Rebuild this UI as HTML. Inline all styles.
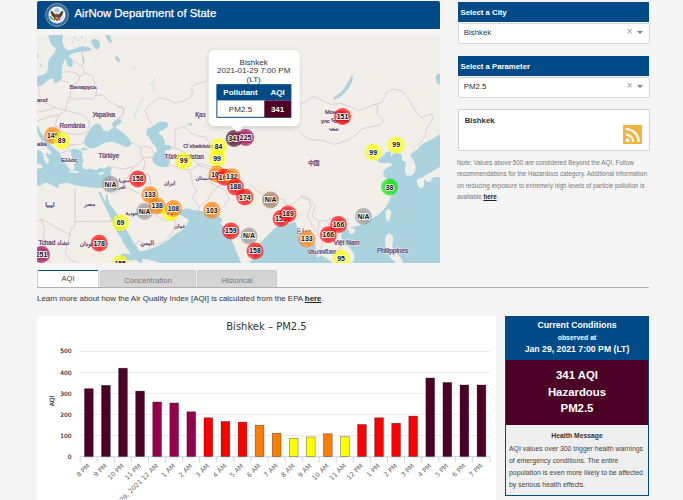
<!DOCTYPE html>
<html lang="en">
<head>
<meta charset="utf-8">
<title>AirNow Department of State</title>
<style>
*{box-sizing:border-box;margin:0;padding:0}
html,body{width:683px;height:500px;overflow:hidden;background:#f5f5f5;font-family:"Liberation Sans",sans-serif;color:#333}
.abs{position:absolute}
#hdr{left:37px;top:1px;width:403px;height:28px;background:#004a87;border-radius:2px 2px 0 0}
#hdr .t{position:absolute;left:37.5px;top:5.5px;font-size:11.4px;font-weight:normal;color:#fff;white-space:nowrap;-webkit-text-stroke:0.25px #fff}
#map{left:37px;top:35px;width:403px;height:228px;background:#f2efe9;overflow:hidden}
.ph{left:458px;width:191px;height:19.5px;background:#004a87;color:#fff;font-size:7.75px;font-weight:bold;padding:5.6px 0 0 2.6px;white-space:nowrap}
.sel{left:457.7px;width:192px;height:20.8px;background:#fff;border:1px solid #d6d6d6;border-radius:2px;font-size:7.9px;color:#333;padding:3.5px 0 0 5px}
.sel .x{position:absolute;left:167.8px;top:1.4px;font-size:10.5px;color:#999}
.sel .a{position:absolute;left:178.1px;top:7.1px;width:0;height:0;border-left:3.1px solid transparent;border-right:3.1px solid transparent;border-top:3px solid #808080}
#city{left:457.7px;top:109.1px;width:192px;height:42.2px;background:#fff;border:1px solid #d2d2d2;font-size:7.8px;font-weight:bold;color:#333;padding:5.9px 0 0 6px}
#note{left:456.9px;top:157.2px;width:195px;font-size:6.27px;line-height:11.3px;color:#777;white-space:nowrap}
#note b{color:#222;text-decoration:underline}
.tab{top:270.3px;height:17px;font-size:7.6px;text-align:center;padding-top:5px;color:#777;background:#d4d4d4;border:1px solid #ccc;border-bottom:none;border-radius:2px 2px 0 0}
#learn{left:37px;top:294px;font-size:7.9px;color:#333;white-space:nowrap}
#learn b{text-decoration:underline;color:#222}
#chart{left:37px;top:316px;width:459px;height:184px;background:#fff}
#cc{left:505px;top:316px;width:144px;height:180px;border:1px solid #004a87;background:#efefef}
#cc .h{position:absolute;left:-1px;top:-1px;width:144px;height:43.6px;background:#004a87;color:#fff;text-align:center;font-weight:bold}
#cc .m{position:absolute;left:0;top:42.6px;width:142px;height:65.6px;background:#4c0026;color:#fff;text-align:center;font-weight:bold;font-size:11.4px;line-height:16.3px;padding-top:7.7px}
#cc .hm{position:absolute;left:0;top:108.2px;width:142px;font-size:6.9px;line-height:12px;color:#444;padding:4.4px 0 0 3px;white-space:nowrap}
</style>
</head>
<body>
<div id="hdr" class="abs">
<svg class="abs" style="left:8px;top:2px" width="24" height="24" viewBox="0 0 24 24">
<circle cx="12" cy="12" r="11.7" fill="#b9b36a"/>
<circle cx="12" cy="12" r="11.1" fill="#2f6db3"/>
<circle cx="12" cy="12" r="8.5" fill="#f4f5f3"/>
<circle cx="12" cy="7.2" r="2.5" fill="#a9cbe0"/>
<path d="M5.6 8.2 Q7.2 7.6 8.2 9 Q9.6 11 11 11.6 L12 10.6 L13 11.6 Q14.4 11 15.8 9 Q16.8 7.6 18.4 8.2 Q18.2 12.6 14.6 15.2 L15.6 17.6 L13.2 16.6 L12 18.4 L10.8 16.6 L8.4 17.6 L9.4 15.2 Q5.8 12.6 5.6 8.2Z" fill="#5e4424"/>
<rect x="10.4" y="12.6" width="3.2" height="3.6" rx="1" fill="#e8707a"/>
<rect x="10.4" y="12.6" width="3.2" height="1.2" fill="#1f3f7f"/>
<path d="M5.2 13 Q5.6 15.6 8.6 16.6" stroke="#4c8a3a" stroke-width="1.3" fill="none"/>
<path d="M15.6 16.6 Q17.6 15.8 18.4 14" stroke="#9a9a8a" stroke-width="0.7" fill="none"/>
</svg>
<div class="t">AirNow Department of State</div>
</div>

<div id="map" class="abs">
<svg id="mapsvg" class="abs" style="left:0;top:0" width="403" height="228" viewBox="37 35 403 228">
<!--MAP-->
<defs><filter id="blur" x="-20%" y="-20%" width="140%" height="140%"><feGaussianBlur stdDeviation="2"/></filter></defs>
<rect x="37" y="35" width="403" height="228" fill="#f2efe9"/>
<path d="M49.7 33.5 C51.9 32.2 59.4 32.2 61.7 33.5 C64.0 34.9 62.1 38.7 62.5 41.0 C62.9 43.3 63.0 44.6 64.0 46.2 C64.9 47.9 65.8 49.6 67.7 50.0 C69.6 50.4 71.9 49.2 74.5 48.5 C77.0 47.8 79.1 46.4 82.0 46.2 C84.8 46.1 88.6 47.1 90.2 47.7 C91.8 48.4 91.9 49.3 91.0 50.0 C90.0 50.7 87.4 51.1 85.0 51.5 C82.5 51.9 79.8 51.8 77.5 52.2 C75.2 52.6 73.7 53.1 72.2 53.7 C70.7 54.4 69.5 55.3 69.2 56.0 C69.0 56.7 70.2 56.8 70.7 57.5 C71.3 58.2 71.8 58.5 72.2 59.7 C72.6 61.0 73.3 62.9 73.0 64.2 C72.7 65.6 71.8 67.2 70.7 67.2 C69.7 67.2 67.8 65.6 67.0 64.2 C66.2 62.9 66.8 60.3 66.2 59.7 C65.7 59.2 64.7 60.0 64.0 61.2 C63.3 62.5 62.9 64.5 62.5 66.5 C62.1 68.5 61.9 70.2 61.7 72.5 C61.6 74.8 62.4 77.7 61.7 79.2 C61.1 80.7 58.8 80.1 58.0 80.7 C57.2 81.4 57.9 82.7 57.2 83.0 C56.6 83.2 55.1 83.0 54.2 82.2 C53.4 81.4 53.8 78.9 52.7 78.5 C51.7 78.1 50.0 78.9 48.2 80.0 C46.5 81.1 44.6 83.4 43.0 84.5 C41.4 85.6 40.6 85.8 39.2 86.0 C37.9 86.1 36.2 86.7 35.5 85.2 C34.8 83.7 34.6 79.5 35.5 77.7 C36.4 76.0 38.9 76.3 40.7 75.5 C42.6 74.7 44.6 74.6 46.0 73.2 C47.3 71.9 47.8 70.0 48.2 68.0 C48.6 66.0 47.8 63.9 48.2 62.0 C48.6 60.1 49.4 59.1 50.5 57.5 C51.6 55.9 53.3 54.6 54.2 53.0 C55.2 51.4 56.1 49.8 55.7 48.5 C55.3 47.1 53.1 46.8 52.0 45.5 C50.9 44.1 50.1 43.2 49.7 41.0 C49.3 38.8 47.6 34.9 49.7 33.5Z" fill="#aad3df"/>
<path d="M91.7 40.2 C92.4 39.4 94.1 38.5 95.5 38.7 C96.8 39.0 98.4 40.4 99.2 41.7 C100.0 43.1 100.4 44.9 100.0 46.2 C99.6 47.6 98.0 49.1 97.0 49.2 C95.9 49.4 94.9 48.1 94.0 47.0 C93.0 45.9 92.1 44.5 91.7 43.2 C91.3 42.0 91.0 41.1 91.7 40.2Z" fill="#aad3df"/>
<path d="M106.0 34.3 C106.6 34.0 108.7 34.5 109.7 35.7 C110.7 37.0 111.5 39.6 111.7 41.0 C111.8 42.3 111.1 43.4 110.5 43.2 C109.8 43.1 109.0 41.3 108.2 40.2 C107.4 39.2 106.4 38.3 106.0 37.2 C105.6 36.2 105.3 34.5 106.0 34.3Z" fill="#aad3df"/>
<path d="M82.4 56.7 C82.5 55.8 83.4 56.4 83.8 57.5 C84.1 58.6 84.5 61.8 84.4 62.7 C84.3 63.7 83.5 63.8 83.2 62.7 C82.8 61.7 82.3 57.7 82.4 56.7Z" fill="#aad3df"/>
<path d="M115.0 57.2 C115.1 56.6 116.3 56.1 117.2 56.7 C118.1 57.3 119.5 59.6 119.8 60.5 C120.0 61.4 119.4 61.8 118.7 61.7 C118.1 61.6 116.8 60.5 116.2 59.7 C115.5 58.9 114.8 57.7 115.0 57.2Z" fill="#aad3df"/>
<path d="M88.7 131.2 C89.7 129.8 91.0 127.3 92.5 126.0 C94.0 124.6 95.4 123.8 97.0 123.7 C98.6 123.7 100.4 124.6 101.5 125.7 C102.5 126.8 101.9 128.7 103.0 129.7 C104.0 130.8 106.0 131.8 107.5 131.7 C108.9 131.6 110.1 129.9 111.2 129.0 C112.3 128.1 113.3 127.5 113.5 126.7 C113.6 125.9 112.0 125.4 112.0 124.5 C112.0 123.6 112.2 122.7 113.5 121.8 C114.7 120.8 117.2 119.3 118.7 119.2 C120.2 119.2 121.7 120.5 121.7 121.5 C121.7 122.4 119.8 123.5 118.7 124.5 C117.6 125.4 115.7 125.8 115.7 126.7 C115.7 127.7 117.1 128.4 118.7 129.7 C120.3 131.1 122.7 132.3 124.7 134.2 C126.7 136.1 128.8 138.4 130.0 140.2 C131.1 142.0 131.7 143.1 131.2 144.3 C130.6 145.5 128.8 146.9 127.0 147.0 C125.1 147.1 123.7 145.7 121.0 144.7 C118.3 143.8 115.1 142.0 112.0 141.7 C108.9 141.5 106.4 142.3 103.7 143.2 C101.0 144.2 99.3 146.0 97.0 147.0 C94.7 147.9 92.9 148.6 91.0 148.5 C89.1 148.3 87.7 147.3 86.5 146.2 C85.3 145.1 84.5 144.0 84.2 142.5 C84.0 141.0 84.4 139.5 85.0 138.0 C85.5 136.5 86.6 135.4 87.2 134.2 C87.9 133.0 87.8 132.7 88.7 131.2Z" fill="#aad3df"/>
<path d="M81.2 148.5 C81.8 148.1 83.8 147.6 85.0 147.7 C86.2 147.9 88.0 148.7 88.0 149.2 C88.0 149.7 86.1 150.3 85.0 150.4 C83.8 150.6 82.4 150.3 81.7 150.0 C81.0 149.6 80.6 148.9 81.2 148.5Z" fill="#aad3df"/>
<path d="M35.5 128.0 C36.6 119.4 39.6 131.1 41.5 133.2 C43.4 135.4 43.8 137.4 46.0 140.0 C48.2 142.6 51.1 145.2 53.5 147.5 C55.9 149.8 58.0 151.0 59.5 152.7 C61.0 154.5 60.8 155.5 61.7 157.2 C62.7 159.0 63.7 160.7 64.7 162.5 C65.8 164.2 66.5 165.6 67.7 167.0 C68.9 168.3 70.3 169.7 71.5 170.0 C72.7 170.2 74.1 169.6 74.5 168.5 C74.9 167.4 73.4 165.1 73.7 164.0 C74.1 162.9 76.1 163.4 76.3 162.5 C76.4 161.5 75.3 159.9 74.5 158.7 C73.6 157.5 72.2 156.9 71.5 155.7 C70.8 154.5 71.1 152.9 70.7 152.0 C70.3 151.0 68.7 151.0 69.2 150.5 C69.8 149.9 72.0 149.1 73.7 149.0 C75.5 148.9 77.5 149.2 79.0 149.7 C80.5 150.3 81.4 150.8 82.0 152.0 C82.5 153.2 81.7 154.9 82.0 156.5 C82.2 158.1 83.5 159.4 83.5 161.0 C83.5 162.6 81.7 164.0 82.0 165.5 C82.2 167.0 83.6 168.7 85.0 169.2 C86.3 169.8 87.6 168.3 89.5 168.5 C91.4 168.6 93.6 170.1 95.5 170.0 C97.4 169.8 98.3 168.0 100.0 167.7 C101.6 167.5 102.8 168.7 104.5 168.5 C106.1 168.2 107.6 166.2 109.0 166.2 C110.3 166.2 111.7 167.5 112.0 168.5 C112.2 169.4 110.6 170.1 110.5 171.5 C110.3 172.8 111.2 174.4 111.2 176.0 C111.2 177.6 111.1 178.9 110.5 180.5 C109.8 182.1 108.8 183.8 107.5 185.0 C106.1 186.2 104.9 186.7 103.0 187.2 C101.1 187.8 99.4 188.0 97.0 188.0 C94.5 188.0 92.2 187.5 89.5 187.2 C86.8 186.9 84.7 186.9 82.0 186.5 C79.3 186.1 77.2 185.6 74.5 185.0 C71.8 184.3 69.7 182.9 67.0 182.7 C64.3 182.6 61.1 183.3 59.5 184.2 C57.9 185.2 59.3 187.8 58.0 188.0 C56.6 188.1 54.2 185.9 52.0 185.0 C49.8 184.0 49.0 183.4 46.0 182.7 C43.0 182.0 37.4 191.1 35.5 181.2 C33.6 171.4 34.4 136.6 35.5 128.0Z" fill="#aad3df"/>
<path d="M98.8 192.7 C98.6 191.6 99.5 191.4 100.3 192.1 C101.0 192.8 102.0 195.2 103.0 196.7 C103.9 198.3 104.8 201.2 105.4 200.8 C106.0 200.4 105.9 195.7 106.3 194.5 C106.6 193.3 107.0 192.8 107.5 194.2 C107.9 195.5 107.4 199.1 108.7 202.0 C109.9 204.9 112.4 207.6 114.4 210.4 C116.3 213.2 117.2 214.1 119.5 217.7 C121.7 221.4 124.5 226.5 127.0 230.8 C129.4 235.0 130.9 238.0 133.0 241.3 C135.0 244.6 136.6 246.8 138.2 249.2 C139.8 251.6 141.3 251.9 141.9 254.5 C142.6 257.0 143.0 262.5 141.9 263.5 C140.9 264.4 138.1 261.4 136.3 259.9 C134.4 258.4 133.6 257.5 131.8 255.1 C129.9 252.6 127.9 249.8 125.8 246.4 C123.6 242.9 121.9 239.7 119.8 235.9 C117.6 232.1 115.6 228.9 113.8 225.4 C111.9 221.8 111.1 219.4 109.6 216.1 C108.1 212.8 106.9 210.3 105.4 207.1 C103.9 203.9 102.4 200.7 101.2 198.1 C100.0 195.5 98.9 193.8 98.8 192.7Z" fill="#aad3df"/>
<path d="M154.7 125.0 C156.2 124.0 157.2 122.5 159.2 122.0 C161.3 121.5 164.4 121.5 166.0 122.0 C167.6 122.5 168.4 123.8 168.2 125.0 C168.1 126.2 166.6 127.7 165.2 128.7 C163.9 129.8 161.9 130.2 160.7 131.0 C159.5 131.8 158.3 132.4 158.5 133.2 C158.6 134.0 160.4 134.3 161.5 135.5 C162.6 136.7 163.8 138.4 164.5 140.0 C165.2 141.6 164.3 143.5 165.2 144.5 C166.2 145.4 168.5 144.7 169.7 145.2 C170.9 145.8 172.0 146.7 172.0 147.5 C172.0 148.3 170.9 149.2 169.7 149.7 C168.5 150.3 165.8 149.5 165.2 150.5 C164.7 151.4 165.9 153.2 166.7 155.0 C167.5 156.7 169.3 158.5 169.7 160.2 C170.1 162.0 169.9 163.5 169.0 164.7 C168.0 165.9 166.2 166.7 164.5 167.0 C162.7 167.2 161.1 166.9 159.2 166.2 C157.3 165.5 155.2 164.6 154.0 163.2 C152.8 161.9 152.4 160.5 152.5 158.7 C152.6 157.0 153.9 155.0 154.7 153.5 C155.5 152.0 156.9 151.7 157.0 150.5 C157.1 149.3 156.4 148.2 155.5 146.7 C154.5 145.2 152.8 143.9 151.7 142.2 C150.7 140.6 150.4 139.1 149.5 137.7 C148.5 136.4 146.9 136.2 146.5 134.7 C146.1 133.3 146.4 130.8 147.2 129.5 C148.0 128.1 149.6 128.1 151.0 127.2 C152.3 126.4 153.3 125.9 154.7 125.0Z" fill="#aad3df"/>
<path d="M188.8 123.8 C189.0 123.4 190.6 123.0 191.2 123.2 C191.7 123.4 192.0 124.6 191.8 125.0 C191.5 125.4 190.2 125.8 189.7 125.6 C189.1 125.4 188.5 124.2 188.8 123.8Z" fill="#aad3df"/>
<path d="M151.3 197.5 C152.4 197.7 154.6 198.9 156.7 200.2 C158.8 201.5 160.6 203.6 163.0 204.7 C165.4 205.8 167.4 206.0 170.2 206.5 C172.9 207.0 176.3 206.7 178.3 207.4 C180.2 208.0 179.5 209.9 181.0 210.1 C182.4 210.2 184.1 208.3 186.4 208.3 C188.6 208.3 191.0 209.6 193.6 210.1 C196.2 210.6 198.5 210.5 200.8 211.0 C203.0 211.5 204.2 212.0 206.2 212.8 C208.1 213.6 209.3 214.8 211.6 215.5 C213.8 216.1 216.8 215.6 218.8 216.4 C220.7 217.2 222.0 218.7 222.4 220.0 C222.7 221.3 220.1 222.3 220.6 223.6 C221.0 224.9 223.8 225.6 225.1 227.2 C226.4 228.8 226.3 229.7 227.8 232.6 C229.2 235.5 231.5 239.8 233.2 243.4 C234.8 246.9 235.5 249.1 236.8 252.4 C238.0 255.6 239.4 258.4 240.4 261.4 C241.3 264.3 256.6 267.3 242.1 268.6 C227.7 269.9 175.2 269.5 160.3 268.6 C145.4 267.6 161.5 264.8 159.4 263.2 C157.3 261.5 152.5 260.4 148.6 259.6 C144.7 258.8 140.7 258.5 137.8 258.7 C134.9 258.8 135.3 260.3 132.4 260.5 C129.5 260.6 123.5 260.7 121.6 259.6 C119.7 258.4 120.0 255.1 121.6 254.2 C123.2 253.2 127.7 254.5 130.6 254.2 C133.5 253.8 134.2 253.3 137.8 252.4 C141.4 251.4 146.2 250.2 150.4 248.8 C154.6 247.3 157.9 245.9 161.2 244.3 C164.4 242.7 166.1 241.4 168.4 239.8 C170.6 238.2 171.5 236.9 173.8 235.3 C176.0 233.7 178.7 232.6 181.0 230.8 C183.2 229.0 185.1 227.3 186.4 225.4 C187.7 223.4 188.5 221.4 188.2 220.0 C187.8 218.5 185.9 218.1 184.6 217.3 C183.3 216.5 182.1 216.1 181.0 215.5 C179.8 214.8 179.6 213.7 178.3 213.7 C177.0 213.7 175.6 215.5 173.8 215.5 C172.0 215.5 169.8 213.7 168.4 213.7 C166.9 213.7 166.8 215.8 165.7 215.5 C164.5 215.2 163.7 213.3 162.1 211.9 C160.5 210.4 158.5 209.0 156.7 207.4 C154.9 205.8 153.3 204.3 152.2 202.9 C151.1 201.4 150.6 200.3 150.4 199.3 C150.2 198.3 150.2 197.3 151.3 197.5Z" fill="#aad3df"/>
<path d="M254.0 269.0 C242.8 266.1 255.3 257.3 256.0 253.0 C256.7 248.7 256.9 247.2 258.0 245.0 C259.1 242.8 260.0 243.0 262.0 241.0 C264.0 239.0 266.7 236.3 269.0 234.0 C271.3 231.7 273.0 229.6 275.0 228.0 C277.0 226.4 277.8 225.8 280.0 225.0 C282.2 224.2 285.0 223.8 287.0 223.4 C289.0 223.0 289.6 223.3 291.0 223.0 C292.4 222.7 293.9 221.3 295.0 222.0 C296.1 222.7 296.5 225.0 297.0 227.0 C297.5 229.0 297.5 231.0 298.0 233.0 C298.5 235.0 299.1 235.8 300.0 238.0 C300.9 240.2 301.7 243.4 303.0 245.0 C304.3 246.6 305.4 247.0 307.0 247.0 C308.6 247.0 310.6 246.1 312.0 245.0 C313.4 243.9 314.3 240.3 315.0 241.0 C315.7 241.7 315.6 246.1 316.0 249.0 C316.4 251.9 316.6 253.4 317.0 257.0 C317.4 260.6 329.3 266.8 318.0 269.0 C306.7 271.2 265.2 271.9 254.0 269.0Z" fill="#aad3df"/>
<path d="M442.8 124.4 C442.5 112.3 441.9 131.0 441.4 132.8 C440.9 134.6 441.5 133.2 440.0 134.2 C438.5 135.2 435.5 137.0 433.0 138.4 C430.5 139.8 428.0 140.8 426.0 141.9 C424.0 143.0 423.3 143.4 421.8 144.7 C420.3 146.0 419.4 147.4 417.6 148.9 C415.8 150.4 413.3 152.1 412.0 153.1 C410.7 154.1 410.6 153.6 410.6 154.5 C410.6 155.4 411.2 156.4 412.0 158.0 C412.8 159.6 414.2 161.6 414.8 163.6 C415.4 165.6 415.8 167.3 415.5 169.2 C415.2 171.1 414.3 173.0 413.4 174.1 C412.5 175.2 411.7 175.2 410.6 175.5 C409.5 175.8 408.0 175.9 407.1 175.5 C406.2 175.1 406.1 174.8 405.7 173.4 C405.3 172.0 405.0 169.7 405.0 167.8 C405.0 165.9 406.2 164.3 405.7 162.9 C405.2 161.5 403.0 161.6 402.2 160.1 C401.4 158.6 402.3 155.7 401.5 154.5 C400.7 153.3 399.2 153.8 398.0 153.5 C396.8 153.3 395.9 152.8 394.9 153.1 C393.9 153.4 393.1 154.5 392.4 155.2 C391.7 155.9 391.3 157.0 391.0 156.9 C390.7 156.8 390.7 155.4 390.7 154.5 C390.7 153.6 391.7 152.1 391.0 151.7 C390.3 151.3 388.4 151.2 386.8 152.1 C385.2 153.0 383.5 155.2 381.9 156.6 C380.3 158.0 378.3 159.1 377.7 160.1 C377.1 161.1 377.3 161.4 378.4 161.9 C379.5 162.5 382.1 163.0 384.0 163.2 C385.9 163.4 387.4 162.6 388.9 162.9 C390.4 163.2 392.5 164.2 392.4 165.0 C392.3 165.8 389.5 166.3 388.2 167.1 C386.9 167.9 386.3 168.3 385.4 169.2 C384.5 170.1 383.6 170.7 383.3 172.0 C383.0 173.3 383.4 175.1 384.0 176.2 C384.6 177.3 386.0 177.2 386.8 178.3 C387.6 179.4 388.2 181.3 388.5 182.1 C388.7 182.8 387.5 181.1 388.1 182.4 C388.8 183.8 391.7 187.2 392.2 189.6 C392.8 192.0 391.9 193.3 391.2 195.7 C390.5 198.1 389.4 200.5 388.1 202.9 C386.8 205.3 385.7 207.0 384.0 209.1 C382.4 211.1 380.8 212.7 378.9 214.2 C377.1 215.7 375.8 216.0 373.8 217.3 C371.8 218.6 369.9 220.1 367.6 221.4 C365.4 222.7 363.7 223.5 361.5 224.4 C359.3 225.4 357.2 225.9 355.3 226.5 C353.5 227.0 352.3 226.8 351.2 227.5 C350.1 228.3 350.1 230.6 349.2 230.6 C348.3 230.6 347.2 227.5 346.1 227.5 C345.0 227.5 344.0 228.9 343.0 230.6 C342.1 232.2 340.8 234.7 341.0 236.7 C341.2 238.8 342.6 240.0 344.1 241.9 C345.5 243.7 347.5 245.0 349.2 247.0 C350.9 249.0 352.4 250.9 353.3 253.1 C354.2 255.3 354.7 257.3 354.3 259.3 C353.9 261.3 352.5 262.2 351.2 264.4 C349.9 266.6 330.5 270.3 347.1 271.6 C363.7 272.9 426.3 284.5 443.5 271.6 C460.7 258.7 442.9 226.5 442.8 200.0 C442.7 173.5 443.1 136.5 442.8 124.4Z" fill="#aad3df"/>
<path d="M315.4 271.6 C312.1 269.7 315.7 264.1 316.4 261.3 C317.1 258.6 318.0 256.9 319.5 256.2 C320.9 255.5 322.6 256.3 324.6 257.2 C326.6 258.2 329.1 259.5 330.7 261.3 C332.4 263.2 333.1 265.6 333.8 267.5 C334.6 269.3 338.2 270.8 334.8 271.6 C331.5 272.3 318.7 273.4 315.4 271.6Z" fill="#aad3df"/>
<path d="M333.7 98.0 C335.0 96.4 339.9 93.5 342.5 90.6 C345.1 87.7 346.7 84.4 348.3 81.8 C349.9 79.2 350.5 76.8 351.3 76.0 C352.1 75.2 353.0 75.7 352.8 77.5 C352.6 79.3 351.9 82.8 350.0 86.0 C348.1 89.2 345.2 92.6 342.5 95.0 C339.8 97.4 336.8 98.9 335.2 99.4 C333.6 99.9 332.4 99.6 333.7 98.0Z" fill="#aad3df"/>
<path d="M436.0 76.0 C436.7 74.4 440.1 72.6 441.0 74.0 C441.9 75.4 441.7 82.4 441.0 84.0 C440.3 85.6 437.9 84.4 437.0 83.0 C436.1 81.6 435.3 77.6 436.0 76.0Z" fill="#aad3df"/>
<path d="M35.5 131.0 C36.4 129.4 39.1 136.1 40.7 138.5 C42.4 140.9 43.1 142.6 44.5 144.5 C45.8 146.4 47.0 147.5 48.2 149.0 C49.5 150.5 51.4 151.7 51.5 152.7 C51.7 153.7 50.0 154.5 49.3 154.5 C48.6 154.5 48.1 152.7 47.5 152.7 C46.9 152.8 45.7 153.6 46.0 155.0 C46.3 156.3 48.7 158.7 49.0 160.2 C49.3 161.8 48.3 163.5 47.5 163.7 C46.7 163.8 45.2 162.3 44.5 161.0 C43.8 159.7 44.3 158.1 43.7 156.5 C43.2 154.9 43.0 153.6 41.5 152.0 C40.0 150.4 36.6 151.3 35.5 147.5 C34.4 143.7 34.6 132.6 35.5 131.0Z" fill="#f2efe9"/>
<path d="M69.2 170.7 C70.0 170.4 72.0 170.3 73.7 170.4 C75.4 170.6 77.9 171.0 78.7 171.5 C79.5 171.9 79.3 172.8 78.2 173.0 C77.2 173.2 74.6 172.8 73.0 172.7 C71.4 172.5 69.9 172.6 69.2 172.2 C68.6 171.9 68.4 171.1 69.2 170.7Z" fill="#f2efe9"/>
<path d="M98.8 173.0 C99.2 172.5 100.5 172.0 101.5 171.9 C102.4 171.9 103.9 172.2 104.0 172.7 C104.2 173.1 103.1 174.2 102.2 174.5 C101.4 174.8 99.8 174.7 99.2 174.5 C98.6 174.2 98.4 173.4 98.8 173.0Z" fill="#f2efe9"/>
<path d="M35.5 164.3 C36.4 163.7 39.5 163.7 40.7 164.3 C42.0 164.9 42.7 167.0 42.2 167.7 C41.8 168.5 39.7 168.5 38.5 168.5 C37.3 168.5 36.0 168.5 35.5 167.7 C35.0 167.0 34.6 164.9 35.5 164.3Z" fill="#f2efe9"/>
<path d="M416.9 180.4 C417.2 179.5 417.9 178.9 419.0 178.3 C420.1 177.7 421.9 177.5 423.2 176.9 C424.5 176.3 424.5 175.7 426.0 174.8 C427.5 173.9 429.6 173.1 431.6 172.0 C433.6 170.9 435.2 169.6 437.2 168.5 C439.2 167.4 441.8 164.7 442.8 166.1 C443.8 167.6 444.1 174.5 442.8 176.5 C441.5 178.4 437.8 176.6 435.8 176.9 C433.8 177.2 432.4 177.5 431.6 178.3 C430.8 179.1 432.4 180.5 431.6 181.1 C430.8 181.7 428.5 182.1 427.4 181.8 C426.3 181.5 425.9 179.8 425.3 179.7 C424.7 179.6 424.2 180.0 423.9 181.1 C423.6 182.2 424.4 184.7 423.9 186.0 C423.4 187.3 422.1 188.1 421.1 188.1 C420.1 188.1 419.0 186.9 418.3 186.0 C417.6 185.1 417.6 184.2 417.3 183.2 C417.1 182.2 416.6 181.3 416.9 180.4Z" fill="#f2efe9"/>
<path d="M386.1 211.1 C386.7 209.8 388.2 208.7 389.2 209.1 C390.1 209.4 391.2 211.1 391.2 213.2 C391.2 215.2 389.9 218.9 389.2 220.3 C388.4 221.8 387.7 222.1 387.1 221.4 C386.5 220.6 385.9 218.1 385.7 216.2 C385.5 214.4 385.5 212.4 386.1 211.1Z" fill="#f2efe9"/>
<path d="M386.1 235.7 C387.0 234.1 388.9 233.1 390.2 233.7 C391.5 234.2 392.9 236.4 393.3 238.8 C393.6 241.2 391.7 244.4 392.2 247.0 C392.8 249.6 394.9 251.3 396.3 253.1 C397.8 255.0 399.3 255.4 400.4 257.2 C401.5 259.1 402.8 261.8 402.5 263.4 C402.1 264.9 399.9 266.2 398.4 265.8 C396.9 265.5 395.8 262.9 394.3 261.3 C392.8 259.8 391.5 259.1 390.2 257.2 C388.9 255.4 388.0 253.7 387.1 251.1 C386.2 248.5 385.2 245.7 385.1 242.9 C384.9 240.1 385.2 237.4 386.1 235.7Z" fill="#f2efe9"/>
<path d="M348.8 229.6 C349.3 228.7 351.2 227.9 352.3 228.1 C353.4 228.3 354.8 229.6 354.9 230.6 C355.0 231.6 353.8 233.2 352.9 233.7 C351.9 234.1 350.3 233.8 349.6 233.0 C348.9 232.3 348.3 230.4 348.8 229.6Z" fill="#f2efe9"/>
<path d="M396.3 267.5 C398.5 266.6 404.0 265.7 406.6 266.5 C409.2 267.2 412.9 270.7 410.7 271.6 C408.5 272.5 396.9 272.3 394.3 271.6 C391.7 270.8 394.1 268.4 396.3 267.5Z" fill="#f2efe9"/>
<ellipse cx="37.7" cy="56.0" rx="1.35" ry="1.80" fill="#aad3df" fill-opacity="0.8"/>
<ellipse cx="40.9" cy="65.7" rx="0.75" ry="2.40" fill="#aad3df" fill-opacity="0.8"/>
<ellipse cx="74.5" cy="38.0" rx="0.90" ry="1.35" fill="#aad3df" fill-opacity="0.8"/>
<ellipse cx="78.2" cy="40.2" rx="0.75" ry="1.05" fill="#aad3df" fill-opacity="0.8"/>
<ellipse cx="82.0" cy="37.2" rx="0.75" ry="1.20" fill="#aad3df" fill-opacity="0.8"/>
<ellipse cx="85.3" cy="41.0" rx="0.60" ry="1.05" fill="#aad3df" fill-opacity="0.8"/>
<ellipse cx="72.2" cy="42.5" rx="0.60" ry="0.90" fill="#aad3df" fill-opacity="0.8"/>
<ellipse cx="118.7" cy="59.0" rx="1.20" ry="0.90" fill="#aad3df" fill-opacity="0.8"/>
<ellipse cx="109.7" cy="67.2" rx="0.90" ry="0.60" fill="#aad3df" fill-opacity="0.8"/>
<ellipse cx="95.5" cy="60.8" rx="0.75" ry="0.60" fill="#aad3df" fill-opacity="0.8"/>
<ellipse cx="120.4" cy="50.0" rx="0.75" ry="0.60" fill="#aad3df" fill-opacity="0.8"/>
<ellipse cx="134.2" cy="68.7" rx="0.75" ry="1.20" fill="#aad3df" fill-opacity="0.8"/>
<path d="M154.8 77.6 L151.3 84.7 L154.8 88.2 L152.1 92.6" fill="none" stroke="#aad3df" stroke-width="0.7" stroke-opacity="0.8"/>
<path d="M143.4 97.8 L139.8 104.9 L134.6 115.4 L138.1 120.7" fill="none" stroke="#aad3df" stroke-width="0.7" stroke-opacity="0.8"/>
<path d="M184.7 127.7 L186.4 125.1 L190.8 123.3" fill="none" stroke="#aad3df" stroke-width="0.7" stroke-opacity="0.8"/>
<path d="M82.0 51.5 L82.7 57.5 L84.2 63.5 L82.0 65.7 L85.0 73.2 L92.5 76.2 L94.7 83.0 L97.0 89.0 L95.8 95.4" fill="none" stroke="#cbb5d2" stroke-width="0.6" stroke-linejoin="round"/>
<path d="M61.7 72.5 L68.5 71.7 L75.2 72.5 L79.7 76.2 L85.0 73.2" fill="none" stroke="#cbb5d2" stroke-width="0.6" stroke-linejoin="round"/>
<path d="M58.0 80.7 L67.0 81.5 L71.5 87.5 L70.3 94.2" fill="none" stroke="#cbb5d2" stroke-width="0.6" stroke-linejoin="round"/>
<path d="M71.5 87.5 L79.0 80.0 L79.7 76.2" fill="none" stroke="#cbb5d2" stroke-width="0.6" stroke-linejoin="round"/>
<path d="M72.2 59.7 L77.5 63.5 L82.0 65.7" fill="none" stroke="#cbb5d2" stroke-width="0.6" stroke-linejoin="round"/>
<path d="M300.0 104.5 L308.2 100.4 L314.3 96.3 L322.5 100.4 L330.7 104.5 L341.0 103.4 L351.2 107.5 L359.4 110.6 L369.7 106.5 L373.8 104.5 L377.9 105.5 L376.9 113.7 L384.0 120.9 L379.9 125.0 L369.7 127.0 L361.5 129.1 L355.3 135.2 L347.1 140.3 L334.8 144.4 L322.5 140.3 L308.2 139.3 L300.0 132.1" fill="none" stroke="#cbb5d2" stroke-width="0.6" stroke-linejoin="round"/>
<path d="M373.8 104.5 L382.0 102.4 L386.1 93.2 L392.2 89.1 L402.5 91.1 L408.6 99.3 L414.8 109.6 L420.9 117.8 L431.2 113.7 L433.2 117.8 L427.1 128.0 L425.0 136.2 L417.9 146.5" fill="none" stroke="#cbb5d2" stroke-width="0.6" stroke-linejoin="round"/>
<path d="M175.0 147.5 L175.0 129.5 L184.0 126.5 L190.0 132.5 L197.5 136.2 L205.0 136.2 L208.7 142.2 L211.0 147.5 L217.0 150.5" fill="none" stroke="#cbb5d2" stroke-width="0.6" stroke-linejoin="round"/>
<path d="M172.0 147.5 L179.5 149.7 L187.0 153.5 L193.0 159.5 L199.0 165.5 L205.0 167.0 L211.0 170.0" fill="none" stroke="#cbb5d2" stroke-width="0.6" stroke-linejoin="round"/>
<path d="M164.5 167.0 L172.0 165.5 L179.5 168.5 L190.0 170.0 L191.5 176.0 L193.0 185.0" fill="none" stroke="#cbb5d2" stroke-width="0.6" stroke-linejoin="round"/>
<path d="M127.0 142.2 L134.5 143.7 L140.5 147.5 L146.5 146.0 L151.7 148.2 L154.0 153.5" fill="none" stroke="#cbb5d2" stroke-width="0.6" stroke-linejoin="round"/>
<path d="M140.5 147.5 L141.2 155.0 L145.0 161.0 L143.5 170.0 L149.5 176.0 L151.0 185.0" fill="none" stroke="#cbb5d2" stroke-width="0.6" stroke-linejoin="round"/>
<path d="M75.2 187.0 L75.2 221.5 L112.0 221.2" fill="none" stroke="#cbb5d2" stroke-width="0.6" stroke-linejoin="round"/>
<path d="M75.2 221.5 L74.5 227.5 L70.7 228.2 L70.0 235.0 L41.5 219.2 L37.0 220.7" fill="none" stroke="#cbb5d2" stroke-width="0.6" stroke-linejoin="round"/>
<path d="M41.5 219.2 L44.5 229.0 L43.0 239.5 L46.0 250.0 L50.5 265.0" fill="none" stroke="#cbb5d2" stroke-width="0.6" stroke-linejoin="round"/>
<path d="M70.0 235.0 L67.0 244.0 L65.5 253.0 L71.5 260.5 L82.0 265.0" fill="none" stroke="#cbb5d2" stroke-width="0.6" stroke-linejoin="round"/>
<path d="M250.0 184.0 L257.0 191.0 L265.0 195.0 L275.0 197.0 L284.0 200.0 L286.0 205.0 L293.0 204.0 L301.0 197.0 L309.0 200.0 L311.0 207.0 L307.0 215.0 L311.0 223.0 L316.0 231.0" fill="none" stroke="#cbb5d2" stroke-width="0.6" stroke-linejoin="round"/>
<path d="M207.0 174.0 L211.0 183.0 L219.0 187.0 L226.0 191.0 L229.0 199.0 L225.0 205.0 L219.0 211.0 L217.0 215.0" fill="none" stroke="#cbb5d2" stroke-width="0.6" stroke-linejoin="round"/>
<path d="M300.0 195.7 L308.2 197.8 L315.4 206.0 L312.3 216.2 L319.5 221.4 L326.6 220.3 L333.8 217.3 L341.0 220.3 L347.1 224.4" fill="none" stroke="#cbb5d2" stroke-width="0.6" stroke-linejoin="round"/>
<path d="M319.5 221.4 L317.4 232.6 L322.5 242.9 L320.5 253.1 L322.5 263.4" fill="none" stroke="#cbb5d2" stroke-width="0.6" stroke-linejoin="round"/>
<path d="M326.6 220.3 L330.7 228.5 L335.9 236.7 L341.0 244.9 L337.9 253.1 L344.1 256.2" fill="none" stroke="#cbb5d2" stroke-width="0.6" stroke-linejoin="round"/>
<path d="M69.2 97.0 L76.0 99.2 L86.5 98.5 L93.2 99.2 L95.5 95.5 L103.0 94.7 L107.5 100.0 L115.0 104.5 L124.0 109.0 L122.5 115.0 L118.7 118.7 L115.0 121.0" fill="none" stroke="#cbb5d2" stroke-width="0.6" stroke-linejoin="round"/>
<path d="M70.7 94.0 L69.2 97.0 L67.0 104.5 L65.5 110.5" fill="none" stroke="#cbb5d2" stroke-width="0.6" stroke-linejoin="round"/>
<path d="M65.5 110.5 L71.5 112.0 L80.5 114.2 L86.5 117.2 L89.5 122.5 L88.0 128.5" fill="none" stroke="#cbb5d2" stroke-width="0.6" stroke-linejoin="round"/>
<path d="M65.5 110.5 L59.5 115.0 L56.5 120.2 L55.0 125.5 L61.0 130.0 L65.5 133.0 L76.0 134.5 L85.0 133.0 L88.7 130.7" fill="none" stroke="#cbb5d2" stroke-width="0.6" stroke-linejoin="round"/>
<path d="M37.0 112.0 L46.0 110.5 L55.0 107.5 L65.5 110.5" fill="none" stroke="#cbb5d2" stroke-width="0.6" stroke-linejoin="round"/>
<path d="M37.0 121.0 L47.5 117.2 L59.5 115.0" fill="none" stroke="#cbb5d2" stroke-width="0.6" stroke-linejoin="round"/>
<path d="M61.0 130.0 L62.5 137.5 L70.0 145.0 L80.5 144.2 L85.0 142.0" fill="none" stroke="#cbb5d2" stroke-width="0.6" stroke-linejoin="round"/>
<path d="M70.0 145.0 L67.0 151.0 L61.0 153.2" fill="none" stroke="#cbb5d2" stroke-width="0.6" stroke-linejoin="round"/>
<path d="M38.8 77.5 L38.5 85.0 L39.2 94.0 L41.5 101.5 L37.0 104.5" fill="none" stroke="#cbb5d2" stroke-width="0.6" stroke-linejoin="round"/>
<path d="M41.5 101.5 L49.0 104.5 L55.0 107.5" fill="none" stroke="#cbb5d2" stroke-width="0.6" stroke-linejoin="round"/>
<path d="M112.3 167.0 L122.2 168.8 L133.0 167.0 L139.3 163.4 L142.0 158.0" fill="none" stroke="#cbb5d2" stroke-width="0.6" stroke-linejoin="round"/>
<path d="M133.0 167.0 L128.5 176.0 L124.0 181.4 L115.0 181.4" fill="none" stroke="#cbb5d2" stroke-width="0.6" stroke-linejoin="round"/>
<path d="M124.0 181.4 L124.0 186.8 L116.8 192.2 L112.3 194.0" fill="none" stroke="#cbb5d2" stroke-width="0.6" stroke-linejoin="round"/>
<path d="M124.0 186.8 L133.0 190.4 L140.2 194.0 L144.1 196.1" fill="none" stroke="#cbb5d2" stroke-width="0.6" stroke-linejoin="round"/>
<path d="M192.9 185.0 L196.9 190.4 L192.4 197.6 L198.7 206.6 L197.8 215.6 L192.4 217.7" fill="none" stroke="#cbb5d2" stroke-width="0.6" stroke-linejoin="round"/>
<path d="M198.7 206.6 L206.8 201.2 L212.1 192.2 L221.1 185.0" fill="none" stroke="#cbb5d2" stroke-width="0.6" stroke-linejoin="round"/>
<path d="M190.6 170.0 L201.4 163.4 L212.1 167.0 L221.1 164.3" fill="none" stroke="#cbb5d2" stroke-width="0.6" stroke-linejoin="round"/>
<path d="M156.4 215.6 L165.4 221.0 L174.4 219.2 L176.2 224.6 L172.6 231.8 L165.4 240.8 L151.0 246.2 L138.4 240.8 L133.0 248.0" fill="none" stroke="#cbb5d2" stroke-width="0.6" stroke-linejoin="round"/>
<path d="M142.0 158.0 L151.0 157.1 L157.3 160.2" fill="none" stroke="#cbb5d2" stroke-width="0.6" stroke-linejoin="round"/>
<path d="M153.0 125.1 L147.8 118.1 L145.1 110.1 L149.5 104.9 L154.8 100.5 L159.2 97.8 L168.0 99.6 L175.0 103.1 L182.0 101.4 L189.9 97.8 L192.6 92.6 L191.7 87.3 L196.1 83.8 L204.9 82.0 L208.4 78.5" fill="none" stroke="#cbb5d2" stroke-width="0.6" stroke-linejoin="round"/>
<path d="M117.0 107.5 L122.3 106.6 L124.0 111.9 L120.5 117.2 L117.0 118.9" fill="none" stroke="#cbb5d2" stroke-width="0.6" stroke-linejoin="round"/>
<text x="69.7" y="88.7" font-size="6.2" fill="#745a8a" stroke="#f2efe9" stroke-width="0.9" paint-order="stroke" font-family='"Liberation Sans","DejaVu Sans","Noto Sans CJK SC",sans-serif'>Беларусь</text>
<text x="69.7" y="88.7" font-size="6.2" fill="#745a8a" stroke="#745a8a" stroke-width="0.18" font-family='"Liberation Sans","DejaVu Sans","Noto Sans CJK SC",sans-serif'>Беларусь</text>
<text x="37" y="101.7" font-size="6.2" fill="#745a8a" stroke="#f2efe9" stroke-width="0.9" paint-order="stroke" font-family='"Liberation Sans","DejaVu Sans","Noto Sans CJK SC",sans-serif'>and</text>
<text x="37" y="101.7" font-size="6.2" fill="#745a8a" stroke="#745a8a" stroke-width="0.18" font-family='"Liberation Sans","DejaVu Sans","Noto Sans CJK SC",sans-serif'>and</text>
<text x="92.5" y="116.7" font-size="6.4" fill="#745a8a" stroke="#f2efe9" stroke-width="0.9" paint-order="stroke" font-family='"Liberation Sans","DejaVu Sans","Noto Sans CJK SC",sans-serif'>Україна</text>
<text x="92.5" y="116.7" font-size="6.4" fill="#745a8a" stroke="#745a8a" stroke-width="0.18" font-family='"Liberation Sans","DejaVu Sans","Noto Sans CJK SC",sans-serif'>Україна</text>
<text x="59.5" y="128.2" font-size="6.4" fill="#745a8a" stroke="#f2efe9" stroke-width="0.9" paint-order="stroke" font-family='"Liberation Sans","DejaVu Sans","Noto Sans CJK SC",sans-serif'>România</text>
<text x="59.5" y="128.2" font-size="6.4" fill="#745a8a" stroke="#745a8a" stroke-width="0.18" font-family='"Liberation Sans","DejaVu Sans","Noto Sans CJK SC",sans-serif'>România</text>
<text x="37" y="146" font-size="6.2" fill="#745a8a" stroke="#f2efe9" stroke-width="0.9" paint-order="stroke" font-family='"Liberation Sans","DejaVu Sans","Noto Sans CJK SC",sans-serif'>alia</text>
<text x="37" y="146" font-size="6.2" fill="#745a8a" stroke="#745a8a" stroke-width="0.18" font-family='"Liberation Sans","DejaVu Sans","Noto Sans CJK SC",sans-serif'>alia</text>
<text x="61" y="161.7" font-size="6.0" fill="#745a8a" stroke="#f2efe9" stroke-width="0.9" paint-order="stroke" font-family='"Liberation Sans","DejaVu Sans","Noto Sans CJK SC",sans-serif'>Ελλάς</text>
<text x="61" y="161.7" font-size="6.0" fill="#745a8a" stroke="#745a8a" stroke-width="0.18" font-family='"Liberation Sans","DejaVu Sans","Noto Sans CJK SC",sans-serif'>Ελλάς</text>
<text x="98.5" y="158.3" font-size="6.3" fill="#745a8a" stroke="#f2efe9" stroke-width="0.9" paint-order="stroke" font-family='"Liberation Sans","DejaVu Sans","Noto Sans CJK SC",sans-serif'>Türkiye</text>
<text x="98.5" y="158.3" font-size="6.3" fill="#745a8a" stroke="#745a8a" stroke-width="0.18" font-family='"Liberation Sans","DejaVu Sans","Noto Sans CJK SC",sans-serif'>Türkiye</text>
<text x="195.2" y="116.7" font-size="6.4" fill="#745a8a" stroke="#f2efe9" stroke-width="0.9" paint-order="stroke" font-family='"Liberation Sans","DejaVu Sans","Noto Sans CJK SC",sans-serif'>Қаз</text>
<text x="195.2" y="116.7" font-size="6.4" fill="#745a8a" stroke="#745a8a" stroke-width="0.18" font-family='"Liberation Sans","DejaVu Sans","Noto Sans CJK SC",sans-serif'>Қаз</text>
<text x="183.2" y="147.8" font-size="6.2" fill="#745a8a" stroke="#f2efe9" stroke-width="0.9" paint-order="stroke" font-family='"Liberation Sans","DejaVu Sans","Noto Sans CJK SC",sans-serif'>Oʻzbekiston</text>
<text x="183.2" y="147.8" font-size="6.2" fill="#745a8a" stroke="#745a8a" stroke-width="0.18" font-family='"Liberation Sans","DejaVu Sans","Noto Sans CJK SC",sans-serif'>Oʻzbekiston</text>
<text x="164.5" y="158.7" font-size="6.5" fill="#745a8a" stroke="#f2efe9" stroke-width="0.9" paint-order="stroke" font-family='"Liberation Sans","DejaVu Sans","Noto Sans CJK SC",sans-serif'>Türkmenistan</text>
<text x="164.5" y="158.7" font-size="6.5" fill="#745a8a" stroke="#745a8a" stroke-width="0.18" font-family='"Liberation Sans","DejaVu Sans","Noto Sans CJK SC",sans-serif'>Türkmenistan</text>
<text x="163.9" y="184.9" font-size="5.4" fill="#745a8a" stroke="#f2efe9" stroke-width="0.9" paint-order="stroke" font-family='"Liberation Sans","DejaVu Sans","Noto Sans CJK SC",sans-serif'>ایران</text>
<text x="163.9" y="184.9" font-size="5.4" fill="#745a8a" stroke="#745a8a" stroke-width="0.18" font-family='"Liberation Sans","DejaVu Sans","Noto Sans CJK SC",sans-serif'>ایران</text>
<text x="195.4" y="179.6" font-size="5.4" fill="#745a8a" stroke="#f2efe9" stroke-width="0.9" paint-order="stroke" font-family='"Liberation Sans","DejaVu Sans","Noto Sans CJK SC",sans-serif'>افغانستان</text>
<text x="195.4" y="179.6" font-size="5.4" fill="#745a8a" stroke="#745a8a" stroke-width="0.18" font-family='"Liberation Sans","DejaVu Sans","Noto Sans CJK SC",sans-serif'>افغانستان</text>
<text x="45.2" y="206.5" font-size="6.2" fill="#745a8a" stroke="#f2efe9" stroke-width="0.9" paint-order="stroke" font-family='"Liberation Sans","DejaVu Sans","Noto Sans CJK SC",sans-serif'>ليبيا</text>
<text x="45.2" y="206.5" font-size="6.2" fill="#745a8a" stroke="#745a8a" stroke-width="0.18" font-family='"Liberation Sans","DejaVu Sans","Noto Sans CJK SC",sans-serif'>ليبيا</text>
<text x="84.2" y="205.7" font-size="5.7" fill="#745a8a" stroke="#f2efe9" stroke-width="0.9" paint-order="stroke" font-family='"Liberation Sans","DejaVu Sans","Noto Sans CJK SC",sans-serif'>مصر</text>
<text x="84.2" y="205.7" font-size="5.7" fill="#745a8a" stroke="#745a8a" stroke-width="0.18" font-family='"Liberation Sans","DejaVu Sans","Noto Sans CJK SC",sans-serif'>مصر</text>
<text x="38.5" y="245.2" font-size="6.3" fill="#745a8a" stroke="#f2efe9" stroke-width="0.9" paint-order="stroke" font-family='"Liberation Sans","DejaVu Sans","Noto Sans CJK SC",sans-serif'>Tchad تشاد</text>
<text x="38.5" y="245.2" font-size="6.3" fill="#745a8a" stroke="#745a8a" stroke-width="0.18" font-family='"Liberation Sans","DejaVu Sans","Noto Sans CJK SC",sans-serif'>Tchad تشاد</text>
<text x="79.7" y="245.8" font-size="5.8" fill="#745a8a" stroke="#f2efe9" stroke-width="0.9" paint-order="stroke" font-family='"Liberation Sans","DejaVu Sans","Noto Sans CJK SC",sans-serif'>السودان</text>
<text x="79.7" y="245.8" font-size="5.8" fill="#745a8a" stroke="#745a8a" stroke-width="0.18" font-family='"Liberation Sans","DejaVu Sans","Noto Sans CJK SC",sans-serif'>السودان</text>
<text x="125.5" y="214.7" font-size="5.4" fill="#745a8a" stroke="#f2efe9" stroke-width="0.9" paint-order="stroke" font-family='"Liberation Sans","DejaVu Sans","Noto Sans CJK SC",sans-serif'>السعودية</text>
<text x="125.5" y="214.7" font-size="5.4" fill="#745a8a" stroke="#745a8a" stroke-width="0.18" font-family='"Liberation Sans","DejaVu Sans","Noto Sans CJK SC",sans-serif'>السعودية</text>
<text x="174.1" y="227.5" font-size="5.2" fill="#745a8a" stroke="#f2efe9" stroke-width="0.9" paint-order="stroke" font-family='"Liberation Sans","DejaVu Sans","Noto Sans CJK SC",sans-serif'>عمان</text>
<text x="174.1" y="227.5" font-size="5.2" fill="#745a8a" stroke="#745a8a" stroke-width="0.18" font-family='"Liberation Sans","DejaVu Sans","Noto Sans CJK SC",sans-serif'>عمان</text>
<text x="140.5" y="244.8" font-size="6.0" fill="#745a8a" stroke="#f2efe9" stroke-width="0.9" paint-order="stroke" font-family='"Liberation Sans","DejaVu Sans","Noto Sans CJK SC",sans-serif'>اليمن</text>
<text x="140.5" y="244.8" font-size="6.0" fill="#745a8a" stroke="#745a8a" stroke-width="0.18" font-family='"Liberation Sans","DejaVu Sans","Noto Sans CJK SC",sans-serif'>اليمن</text>
<text x="118.7" y="182" font-size="4.6" fill="#745a8a" stroke="#f2efe9" stroke-width="0.9" paint-order="stroke" font-family='"Liberation Sans","DejaVu Sans","Noto Sans CJK SC",sans-serif'>سوريا</text>
<text x="118.7" y="182" font-size="4.6" fill="#745a8a" stroke="#745a8a" stroke-width="0.18" font-family='"Liberation Sans","DejaVu Sans","Noto Sans CJK SC",sans-serif'>سوريا</text>
<text x="113" y="188.5" font-size="4.6" fill="#745a8a" stroke="#f2efe9" stroke-width="0.9" paint-order="stroke" font-family='"Liberation Sans","DejaVu Sans","Noto Sans CJK SC",sans-serif'>العراق</text>
<text x="113" y="188.5" font-size="4.6" fill="#745a8a" stroke="#745a8a" stroke-width="0.18" font-family='"Liberation Sans","DejaVu Sans","Noto Sans CJK SC",sans-serif'>العراق</text>
<text x="308.2" y="164.5" font-size="5.65" fill="#745a8a" stroke="#f2efe9" stroke-width="0.9" paint-order="stroke" font-family='"Liberation Sans","DejaVu Sans","Noto Sans CJK SC",sans-serif'>中国</text>
<text x="308.2" y="164.5" font-size="5.65" fill="#745a8a" stroke="#745a8a" stroke-width="0.18" font-family='"Liberation Sans","DejaVu Sans","Noto Sans CJK SC",sans-serif'>中国</text>
<text x="325" y="113.7" font-size="5.8" fill="#745a8a" stroke="#f2efe9" stroke-width="0.9" paint-order="stroke" font-family='"Liberation Sans","DejaVu Sans","Noto Sans CJK SC",sans-serif'>Монгол</text>
<text x="325" y="113.7" font-size="5.8" fill="#745a8a" stroke="#745a8a" stroke-width="0.18" font-family='"Liberation Sans","DejaVu Sans","Noto Sans CJK SC",sans-serif'>Монгол</text>
<text x="321.1" y="122.9" font-size="5.6" fill="#745a8a" stroke="#f2efe9" stroke-width="0.9" paint-order="stroke" font-family='"Liberation Sans","DejaVu Sans","Noto Sans CJK SC",sans-serif'>улс ᠮᠣᠩᠭᠣᠯ</text>
<text x="321.1" y="122.9" font-size="5.6" fill="#745a8a" stroke="#745a8a" stroke-width="0.18" font-family='"Liberation Sans","DejaVu Sans","Noto Sans CJK SC",sans-serif'>улс ᠮᠣᠩᠭᠣᠯ</text>
<text x="329.3" y="130.5" font-size="4.4" fill="#745a8a" stroke="#f2efe9" stroke-width="0.9" paint-order="stroke" font-family='"Liberation Sans","DejaVu Sans","Noto Sans CJK SC",sans-serif'>ᠤᠯᠤᠰ</text>
<text x="329.3" y="130.5" font-size="4.4" fill="#745a8a" stroke="#745a8a" stroke-width="0.18" font-family='"Liberation Sans","DejaVu Sans","Noto Sans CJK SC",sans-serif'>ᠤᠯᠤᠰ</text>
<text x="333.8" y="244.5" font-size="6.3" fill="#745a8a" stroke="#f2efe9" stroke-width="0.9" paint-order="stroke" font-family='"Liberation Sans","DejaVu Sans","Noto Sans CJK SC",sans-serif'>Việt Nam</text>
<text x="333.8" y="244.5" font-size="6.3" fill="#745a8a" stroke="#745a8a" stroke-width="0.18" font-family='"Liberation Sans","DejaVu Sans","Noto Sans CJK SC",sans-serif'>Việt Nam</text>
<text x="308.2" y="253.5" font-size="5.5" fill="#745a8a" stroke="#f2efe9" stroke-width="0.9" paint-order="stroke" font-family='"Liberation Sans","DejaVu Sans","Noto Sans CJK SC",sans-serif'>ประเทศไทย</text>
<text x="308.2" y="253.5" font-size="5.5" fill="#745a8a" stroke="#745a8a" stroke-width="0.18" font-family='"Liberation Sans","DejaVu Sans","Noto Sans CJK SC",sans-serif'>ประเทศไทย</text>
<text x="376.9" y="252.7" font-size="6.5" fill="#745a8a" stroke="#f2efe9" stroke-width="0.9" paint-order="stroke" font-family='"Liberation Sans","DejaVu Sans","Noto Sans CJK SC",sans-serif'>Philippines</text>
<text x="376.9" y="252.7" font-size="6.5" fill="#745a8a" stroke="#745a8a" stroke-width="0.18" font-family='"Liberation Sans","DejaVu Sans","Noto Sans CJK SC",sans-serif'>Philippines</text>
<text x="297" y="232" font-size="4.8" fill="#745a8a" stroke="#f2efe9" stroke-width="0.9" paint-order="stroke" font-family='"Liberation Sans","DejaVu Sans","Noto Sans CJK SC",sans-serif'>မြန်မာ</text>
<text x="297" y="232" font-size="4.8" fill="#745a8a" stroke="#745a8a" stroke-width="0.18" font-family='"Liberation Sans","DejaVu Sans","Noto Sans CJK SC",sans-serif'>မြန်မာ</text>
<circle cx="52.7" cy="135.5" r="8.5" fill="#ff7e00" fill-opacity="0.66"/><circle cx="52.7" cy="135.5" r="6.2" fill="#ff7e00" fill-opacity="0.3"/>
<text x="52.7" y="137.9" text-anchor="middle" font-size="6.9" font-weight="bold" fill="#111" stroke="#fff" stroke-width="1.9" stroke-opacity="0.9" paint-order="stroke" stroke-linejoin="round" font-family='"Liberation Sans",sans-serif'>149</text>
<circle cx="61.7" cy="140.7" r="8.5" fill="#ffff00" fill-opacity="0.66"/><circle cx="61.7" cy="140.7" r="6.2" fill="#ffff00" fill-opacity="0.3"/>
<text x="61.7" y="143.1" text-anchor="middle" font-size="6.9" font-weight="bold" fill="#111" stroke="#fff" stroke-width="1.9" stroke-opacity="0.9" paint-order="stroke" stroke-linejoin="round" font-family='"Liberation Sans",sans-serif'>89</text>
<circle cx="110.5" cy="184.2" r="8.5" fill="#999999" fill-opacity="0.66"/><circle cx="110.5" cy="184.2" r="6.2" fill="#999999" fill-opacity="0.3"/>
<text x="110.5" y="186.6" text-anchor="middle" font-size="6.9" font-weight="bold" fill="#111" stroke="#fff" stroke-width="1.9" stroke-opacity="0.9" paint-order="stroke" stroke-linejoin="round" font-family='"Liberation Sans",sans-serif'>N/A</text>
<circle cx="137.8" cy="179" r="8.5" fill="#ff0000" fill-opacity="0.66"/><circle cx="137.8" cy="179" r="6.2" fill="#ff0000" fill-opacity="0.3"/>
<text x="137.8" y="181.4" text-anchor="middle" font-size="6.9" font-weight="bold" fill="#111" stroke="#fff" stroke-width="1.9" stroke-opacity="0.9" paint-order="stroke" stroke-linejoin="round" font-family='"Liberation Sans",sans-serif'>158</text>
<circle cx="149.9" cy="194.8" r="8.5" fill="#ff7e00" fill-opacity="0.66"/><circle cx="149.9" cy="194.8" r="6.2" fill="#ff7e00" fill-opacity="0.3"/>
<text x="149.9" y="197.20000000000002" text-anchor="middle" font-size="6.9" font-weight="bold" fill="#111" stroke="#fff" stroke-width="1.9" stroke-opacity="0.9" paint-order="stroke" stroke-linejoin="round" font-family='"Liberation Sans",sans-serif'>133</text>
<circle cx="144.6" cy="211.5" r="8.5" fill="#999999" fill-opacity="0.66"/><circle cx="144.6" cy="211.5" r="6.2" fill="#999999" fill-opacity="0.3"/>
<text x="144.6" y="213.9" text-anchor="middle" font-size="6.9" font-weight="bold" fill="#111" stroke="#fff" stroke-width="1.9" stroke-opacity="0.9" paint-order="stroke" stroke-linejoin="round" font-family='"Liberation Sans",sans-serif'>N/A</text>
<circle cx="157.2" cy="205.9" r="8.5" fill="#ff7e00" fill-opacity="0.66"/><circle cx="157.2" cy="205.9" r="6.2" fill="#ff7e00" fill-opacity="0.3"/>
<text x="157.2" y="208.3" text-anchor="middle" font-size="6.9" font-weight="bold" fill="#111" stroke="#fff" stroke-width="1.9" stroke-opacity="0.9" paint-order="stroke" stroke-linejoin="round" font-family='"Liberation Sans",sans-serif'>138</text>
<circle cx="170.2" cy="212.8" r="8.5" fill="#ffff00" fill-opacity="0.66"/><circle cx="170.2" cy="212.8" r="6.2" fill="#ffff00" fill-opacity="0.3"/>
<text x="170.2" y="215.20000000000002" text-anchor="middle" font-size="6.9" font-weight="bold" fill="#111" stroke="#fff" stroke-width="1.9" stroke-opacity="0.9" paint-order="stroke" stroke-linejoin="round" font-family='"Liberation Sans",sans-serif'>72</text>
<circle cx="173.4" cy="208.5" r="8.5" fill="#ff7e00" fill-opacity="0.66"/><circle cx="173.4" cy="208.5" r="6.2" fill="#ff7e00" fill-opacity="0.3"/>
<text x="173.4" y="210.9" text-anchor="middle" font-size="6.9" font-weight="bold" fill="#111" stroke="#fff" stroke-width="1.9" stroke-opacity="0.9" paint-order="stroke" stroke-linejoin="round" font-family='"Liberation Sans",sans-serif'>108</text>
<circle cx="120.5" cy="222.7" r="8.5" fill="#ffff00" fill-opacity="0.66"/><circle cx="120.5" cy="222.7" r="6.2" fill="#ffff00" fill-opacity="0.3"/>
<text x="120.5" y="225.1" text-anchor="middle" font-size="6.9" font-weight="bold" fill="#111" stroke="#fff" stroke-width="1.9" stroke-opacity="0.9" paint-order="stroke" stroke-linejoin="round" font-family='"Liberation Sans",sans-serif'>69</text>
<circle cx="99.2" cy="243.2" r="8.5" fill="#ff0000" fill-opacity="0.66"/><circle cx="99.2" cy="243.2" r="6.2" fill="#ff0000" fill-opacity="0.3"/>
<text x="99.2" y="245.6" text-anchor="middle" font-size="6.9" font-weight="bold" fill="#111" stroke="#fff" stroke-width="1.9" stroke-opacity="0.9" paint-order="stroke" stroke-linejoin="round" font-family='"Liberation Sans",sans-serif'>178</text>
<circle cx="41.5" cy="254.5" r="8.5" fill="#99004c" fill-opacity="0.66"/><circle cx="41.5" cy="254.5" r="6.2" fill="#99004c" fill-opacity="0.3"/>
<text x="41.5" y="256.9" text-anchor="middle" font-size="6.9" font-weight="bold" fill="#111" stroke="#fff" stroke-width="1.9" stroke-opacity="0.9" paint-order="stroke" stroke-linejoin="round" font-family='"Liberation Sans",sans-serif'>251</text>
<circle cx="120.2" cy="263.5" r="8.5" fill="#ffff00" fill-opacity="0.66"/><circle cx="120.2" cy="263.5" r="6.2" fill="#ffff00" fill-opacity="0.3"/>
<text x="120.2" y="265.9" text-anchor="middle" font-size="6.9" font-weight="bold" fill="#111" stroke="#fff" stroke-width="1.9" stroke-opacity="0.9" paint-order="stroke" stroke-linejoin="round" font-family='"Liberation Sans",sans-serif'>155</text>
<circle cx="183.7" cy="161" r="8.5" fill="#ffff00" fill-opacity="0.66"/><circle cx="183.7" cy="161" r="6.2" fill="#ffff00" fill-opacity="0.3"/>
<text x="183.7" y="163.4" text-anchor="middle" font-size="6.9" font-weight="bold" fill="#111" stroke="#fff" stroke-width="1.9" stroke-opacity="0.9" paint-order="stroke" stroke-linejoin="round" font-family='"Liberation Sans",sans-serif'>99</text>
<circle cx="218.5" cy="146.7" r="8.5" fill="#ffff00" fill-opacity="0.66"/><circle cx="218.5" cy="146.7" r="6.2" fill="#ffff00" fill-opacity="0.3"/>
<text x="218.5" y="149.1" text-anchor="middle" font-size="6.9" font-weight="bold" fill="#111" stroke="#fff" stroke-width="1.9" stroke-opacity="0.9" paint-order="stroke" stroke-linejoin="round" font-family='"Liberation Sans",sans-serif'>84</text>
<circle cx="217" cy="158.3" r="8.5" fill="#ffff00" fill-opacity="0.66"/><circle cx="217" cy="158.3" r="6.2" fill="#ffff00" fill-opacity="0.3"/>
<text x="217" y="160.70000000000002" text-anchor="middle" font-size="6.9" font-weight="bold" fill="#111" stroke="#fff" stroke-width="1.9" stroke-opacity="0.9" paint-order="stroke" stroke-linejoin="round" font-family='"Liberation Sans",sans-serif'>99</text>
<circle cx="234.2" cy="138.6" r="8.5" fill="#4c0026" fill-opacity="0.66"/><circle cx="234.2" cy="138.6" r="6.2" fill="#4c0026" fill-opacity="0.3"/>
<text x="234.2" y="141.0" text-anchor="middle" font-size="6.9" font-weight="bold" fill="#111" stroke="#fff" stroke-width="1.9" stroke-opacity="0.9" paint-order="stroke" stroke-linejoin="round" font-family='"Liberation Sans",sans-serif'>341</text>
<circle cx="245.6" cy="137.5" r="8.5" fill="#99004c" fill-opacity="0.66"/><circle cx="245.6" cy="137.5" r="6.2" fill="#99004c" fill-opacity="0.3"/>
<text x="245.6" y="139.9" text-anchor="middle" font-size="6.9" font-weight="bold" fill="#111" stroke="#fff" stroke-width="1.9" stroke-opacity="0.9" paint-order="stroke" stroke-linejoin="round" font-family='"Liberation Sans",sans-serif'>225</text>
<circle cx="216.9" cy="174.2" r="8.5" fill="#ff7e00" fill-opacity="0.66"/><circle cx="216.9" cy="174.2" r="6.2" fill="#ff7e00" fill-opacity="0.3"/>
<text x="216.9" y="176.6" text-anchor="middle" font-size="6.9" font-weight="bold" fill="#111" stroke="#fff" stroke-width="1.9" stroke-opacity="0.9" paint-order="stroke" stroke-linejoin="round" font-family='"Liberation Sans",sans-serif'>101</text>
<circle cx="224.6" cy="177.3" r="8.5" fill="#ff0000" fill-opacity="0.66"/><circle cx="224.6" cy="177.3" r="6.2" fill="#ff0000" fill-opacity="0.3"/>
<text x="224.6" y="179.70000000000002" text-anchor="middle" font-size="6.9" font-weight="bold" fill="#111" stroke="#fff" stroke-width="1.9" stroke-opacity="0.9" paint-order="stroke" stroke-linejoin="round" font-family='"Liberation Sans",sans-serif'>160</text>
<circle cx="231.8" cy="176.8" r="8.5" fill="#ff7e00" fill-opacity="0.66"/><circle cx="231.8" cy="176.8" r="6.2" fill="#ff7e00" fill-opacity="0.3"/>
<text x="231.8" y="179.20000000000002" text-anchor="middle" font-size="6.9" font-weight="bold" fill="#111" stroke="#fff" stroke-width="1.9" stroke-opacity="0.9" paint-order="stroke" stroke-linejoin="round" font-family='"Liberation Sans",sans-serif'>132</text>
<circle cx="235.4" cy="187" r="8.5" fill="#ff0000" fill-opacity="0.66"/><circle cx="235.4" cy="187" r="6.2" fill="#ff0000" fill-opacity="0.3"/>
<text x="235.4" y="189.4" text-anchor="middle" font-size="6.9" font-weight="bold" fill="#111" stroke="#fff" stroke-width="1.9" stroke-opacity="0.9" paint-order="stroke" stroke-linejoin="round" font-family='"Liberation Sans",sans-serif'>188</text>
<circle cx="244.8" cy="197.1" r="8.5" fill="#ff0000" fill-opacity="0.66"/><circle cx="244.8" cy="197.1" r="6.2" fill="#ff0000" fill-opacity="0.3"/>
<text x="244.8" y="199.5" text-anchor="middle" font-size="6.9" font-weight="bold" fill="#111" stroke="#fff" stroke-width="1.9" stroke-opacity="0.9" paint-order="stroke" stroke-linejoin="round" font-family='"Liberation Sans",sans-serif'>174</text>
<circle cx="270.6" cy="199.9" r="8.5" fill="#9c7b5c" fill-opacity="0.66"/><circle cx="270.6" cy="199.9" r="6.2" fill="#9c7b5c" fill-opacity="0.3"/>
<text x="270.6" y="202.3" text-anchor="middle" font-size="6.9" font-weight="bold" fill="#111" stroke="#fff" stroke-width="1.9" stroke-opacity="0.9" paint-order="stroke" stroke-linejoin="round" font-family='"Liberation Sans",sans-serif'>N/A</text>
<circle cx="281" cy="218.6" r="8.5" fill="#ff0000" fill-opacity="0.66"/><circle cx="281" cy="218.6" r="6.2" fill="#ff0000" fill-opacity="0.3"/>
<text x="281" y="221.0" text-anchor="middle" font-size="6.9" font-weight="bold" fill="#111" stroke="#fff" stroke-width="1.9" stroke-opacity="0.9" paint-order="stroke" stroke-linejoin="round" font-family='"Liberation Sans",sans-serif'>151</text>
<circle cx="288" cy="214" r="8.5" fill="#ff0000" fill-opacity="0.66"/><circle cx="288" cy="214" r="6.2" fill="#ff0000" fill-opacity="0.3"/>
<text x="288" y="216.4" text-anchor="middle" font-size="6.9" font-weight="bold" fill="#111" stroke="#fff" stroke-width="1.9" stroke-opacity="0.9" paint-order="stroke" stroke-linejoin="round" font-family='"Liberation Sans",sans-serif'>189</text>
<circle cx="211.8" cy="210.3" r="8.5" fill="#ff7e00" fill-opacity="0.66"/><circle cx="211.8" cy="210.3" r="6.2" fill="#ff7e00" fill-opacity="0.3"/>
<text x="211.8" y="212.70000000000002" text-anchor="middle" font-size="6.9" font-weight="bold" fill="#111" stroke="#fff" stroke-width="1.9" stroke-opacity="0.9" paint-order="stroke" stroke-linejoin="round" font-family='"Liberation Sans",sans-serif'>103</text>
<circle cx="230.8" cy="231" r="8.5" fill="#ff0000" fill-opacity="0.66"/><circle cx="230.8" cy="231" r="6.2" fill="#ff0000" fill-opacity="0.3"/>
<text x="230.8" y="233.4" text-anchor="middle" font-size="6.9" font-weight="bold" fill="#111" stroke="#fff" stroke-width="1.9" stroke-opacity="0.9" paint-order="stroke" stroke-linejoin="round" font-family='"Liberation Sans",sans-serif'>159</text>
<circle cx="249" cy="236" r="8.5" fill="#999999" fill-opacity="0.66"/><circle cx="249" cy="236" r="6.2" fill="#999999" fill-opacity="0.3"/>
<text x="249" y="238.4" text-anchor="middle" font-size="6.9" font-weight="bold" fill="#111" stroke="#fff" stroke-width="1.9" stroke-opacity="0.9" paint-order="stroke" stroke-linejoin="round" font-family='"Liberation Sans",sans-serif'>N/A</text>
<circle cx="255" cy="251" r="8.5" fill="#ff0000" fill-opacity="0.66"/><circle cx="255" cy="251" r="6.2" fill="#ff0000" fill-opacity="0.3"/>
<text x="255" y="253.4" text-anchor="middle" font-size="6.9" font-weight="bold" fill="#111" stroke="#fff" stroke-width="1.9" stroke-opacity="0.9" paint-order="stroke" stroke-linejoin="round" font-family='"Liberation Sans",sans-serif'>158</text>
<circle cx="306.8" cy="238.9" r="8.5" fill="#ff7e00" fill-opacity="0.66"/><circle cx="306.8" cy="238.9" r="6.2" fill="#ff7e00" fill-opacity="0.3"/>
<text x="306.8" y="241.3" text-anchor="middle" font-size="6.9" font-weight="bold" fill="#111" stroke="#fff" stroke-width="1.9" stroke-opacity="0.9" paint-order="stroke" stroke-linejoin="round" font-family='"Liberation Sans",sans-serif'>133</text>
<circle cx="338.5" cy="224.4" r="8.5" fill="#ff0000" fill-opacity="0.66"/><circle cx="338.5" cy="224.4" r="6.2" fill="#ff0000" fill-opacity="0.3"/>
<text x="338.5" y="226.8" text-anchor="middle" font-size="6.9" font-weight="bold" fill="#111" stroke="#fff" stroke-width="1.9" stroke-opacity="0.9" paint-order="stroke" stroke-linejoin="round" font-family='"Liberation Sans",sans-serif'>166</text>
<circle cx="328.3" cy="234.7" r="8.5" fill="#ff0000" fill-opacity="0.66"/><circle cx="328.3" cy="234.7" r="6.2" fill="#ff0000" fill-opacity="0.3"/>
<text x="328.3" y="237.1" text-anchor="middle" font-size="6.9" font-weight="bold" fill="#111" stroke="#fff" stroke-width="1.9" stroke-opacity="0.9" paint-order="stroke" stroke-linejoin="round" font-family='"Liberation Sans",sans-serif'>166</text>
<circle cx="363.5" cy="216.6" r="8.5" fill="#999999" fill-opacity="0.66"/><circle cx="363.5" cy="216.6" r="6.2" fill="#999999" fill-opacity="0.3"/>
<text x="363.5" y="219.0" text-anchor="middle" font-size="6.9" font-weight="bold" fill="#111" stroke="#fff" stroke-width="1.9" stroke-opacity="0.9" paint-order="stroke" stroke-linejoin="round" font-family='"Liberation Sans",sans-serif'>N/A</text>
<circle cx="341" cy="258.3" r="8.5" fill="#ffff00" fill-opacity="0.66"/><circle cx="341" cy="258.3" r="6.2" fill="#ffff00" fill-opacity="0.3"/>
<text x="341" y="260.7" text-anchor="middle" font-size="6.9" font-weight="bold" fill="#111" stroke="#fff" stroke-width="1.9" stroke-opacity="0.9" paint-order="stroke" stroke-linejoin="round" font-family='"Liberation Sans",sans-serif'>95</text>
<circle cx="389.6" cy="187.1" r="8.5" fill="#00e400" fill-opacity="0.66"/><circle cx="389.6" cy="187.1" r="6.2" fill="#00e400" fill-opacity="0.3"/>
<text x="389.6" y="189.5" text-anchor="middle" font-size="6.9" font-weight="bold" fill="#111" stroke="#fff" stroke-width="1.9" stroke-opacity="0.9" paint-order="stroke" stroke-linejoin="round" font-family='"Liberation Sans",sans-serif'>38</text>
<circle cx="342.5" cy="116.4" r="8.5" fill="#ff0000" fill-opacity="0.66"/><circle cx="342.5" cy="116.4" r="6.2" fill="#ff0000" fill-opacity="0.3"/>
<text x="342.5" y="118.80000000000001" text-anchor="middle" font-size="6.9" font-weight="bold" fill="#111" stroke="#fff" stroke-width="1.9" stroke-opacity="0.9" paint-order="stroke" stroke-linejoin="round" font-family='"Liberation Sans",sans-serif'>151</text>
<circle cx="373.2" cy="152.3" r="8.5" fill="#ffff00" fill-opacity="0.66"/><circle cx="373.2" cy="152.3" r="6.2" fill="#ffff00" fill-opacity="0.3"/>
<text x="373.2" y="154.70000000000002" text-anchor="middle" font-size="6.9" font-weight="bold" fill="#111" stroke="#fff" stroke-width="1.9" stroke-opacity="0.9" paint-order="stroke" stroke-linejoin="round" font-family='"Liberation Sans",sans-serif'>99</text>
<circle cx="396.2" cy="144.9" r="8.5" fill="#ffff00" fill-opacity="0.66"/><circle cx="396.2" cy="144.9" r="6.2" fill="#ffff00" fill-opacity="0.3"/>
<text x="396.2" y="147.3" text-anchor="middle" font-size="6.9" font-weight="bold" fill="#111" stroke="#fff" stroke-width="1.9" stroke-opacity="0.9" paint-order="stroke" stroke-linejoin="round" font-family='"Liberation Sans",sans-serif'>99</text>
<g font-family='"Liberation Sans",sans-serif'>
<rect x="208.6" y="51" width="90.3" height="76.5" rx="5.5" fill="#000" fill-opacity="0.18" filter="url(#blur)"/>
<path d="M231.2 126 L236.8 132 L242.4 126Z" fill="#fff"/>
<rect x="208.6" y="50" width="91.2" height="76.2" rx="5.5" fill="#fff"/>
<text x="253.7" y="64.7" text-anchor="middle" font-size="8.05" fill="#333">Bishkek</text>
<text x="253.7" y="73.3" text-anchor="middle" font-size="8.05" fill="#333">2021-01-29 7:00 PM</text>
<text x="253.7" y="81.8" text-anchor="middle" font-size="8.05" fill="#333">(LT)</text>
<rect x="216.9" y="84.7" width="74" height="32.6" fill="#fff" stroke="#004a87" stroke-width="1"/>
<rect x="216.9" y="84.7" width="74" height="15.7" fill="#004a87"/>
<rect x="264.3" y="100.4" width="26.6" height="16.9" fill="#4c0026"/>
<text x="240.5" y="94.9" text-anchor="middle" font-size="8.05" font-weight="bold" fill="#fff">Pollutant</text>
<text x="277.6" y="94.9" text-anchor="middle" font-size="8.05" font-weight="bold" fill="#fff">AQI</text>
<text x="240.5" y="111.5" text-anchor="middle" font-size="8.05" fill="#333">PM2.5</text>
<text x="277.6" y="111.5" text-anchor="middle" font-size="8.05" font-weight="bold" fill="#fff">341</text>
</g>
<!--/MAP-->
</svg>
</div>

<div class="abs ph" style="top:2px">Select a City</div>
<div class="abs sel" style="top:23px">Bishkek<span class="x">×</span><span class="a"></span></div>
<div class="abs ph" style="top:56px">Select a Parameter</div>
<div class="abs sel" style="top:77px">PM2.5<span class="x">×</span><span class="a"></span></div>
<div id="city" class="abs">Bishkek
<svg class="abs" style="left:164px;top:14.5px" width="19.8" height="19.8" viewBox="0 0 20 20"><rect width="20" height="20" fill="#f3b43a"/><circle cx="4.6" cy="15.4" r="2" fill="#fff"/><path d="M2.8 9.6 A7.6 7.6 0 0 1 10.4 17.2" stroke="#fff" stroke-width="2.3" fill="none"/><path d="M2.8 4.2 A13 13 0 0 1 15.8 17.2" stroke="#fff" stroke-width="2.3" fill="none"/></svg>
</div>
<div id="note" class="abs">Note: Values above 500 are considered Beyond the AQI. Follow<br>recommendations for the Hazardous category. Additional information<br>on reducing exposure to extremely high levels of particle pollution is<br>available <b>here</b>.</div>

<div class="abs tab" style="left:37px;width:62px;background:#fff;color:#444;border-top:1.4px solid #004a87;padding-top:3.6px;height:18px;top:269.6px">AQI</div>
<div class="abs tab" style="left:100px;width:96px">Concentration</div>
<div class="abs tab" style="left:197px;width:80px">Historical</div>
<div class="abs" style="left:37px;top:286.8px;width:612px;height:1px;background:#b0b0b0"></div>
<div id="learn" class="abs">Learn more about how the Air Quality Index [AQI] is calculated from the EPA <b>here</b>.</div>

<div id="chart" class="abs">
<svg class="abs" style="left:0;top:0" width="459" height="184" viewBox="37 316 459 184" font-family='"DejaVu Sans",sans-serif'>
<!--CHART-->
<line x1="80" x2="490" y1="351.2" y2="351.2" stroke="#e9e9e9" stroke-width="1"/>
<line x1="80" x2="490" y1="372.3" y2="372.3" stroke="#e9e9e9" stroke-width="1"/>
<line x1="80" x2="490" y1="393.3" y2="393.3" stroke="#e9e9e9" stroke-width="1"/>
<line x1="80" x2="490" y1="414.4" y2="414.4" stroke="#e9e9e9" stroke-width="1"/>
<line x1="80" x2="490" y1="435.4" y2="435.4" stroke="#e9e9e9" stroke-width="1"/>
<text x="71.6" y="353.4" text-anchor="end" font-size="5.9" fill="#333" stroke="#333" stroke-width="0.2">500</text>
<text x="71.6" y="374.5" text-anchor="end" font-size="5.9" fill="#333" stroke="#333" stroke-width="0.2">400</text>
<text x="71.6" y="395.5" text-anchor="end" font-size="5.9" fill="#333" stroke="#333" stroke-width="0.2">300</text>
<text x="71.6" y="416.6" text-anchor="end" font-size="5.9" fill="#333" stroke="#333" stroke-width="0.2">200</text>
<text x="71.6" y="437.6" text-anchor="end" font-size="5.9" fill="#333" stroke="#333" stroke-width="0.2">100</text>
<text x="71.6" y="458.7" text-anchor="end" font-size="5.9" fill="#333" stroke="#333" stroke-width="0.2">0</text>
<line x1="80" x2="490" y1="456.8" y2="456.8" stroke="#c0d0e0" stroke-width="1"/>
<line x1="80.2" x2="80.2" y1="456.5" y2="462.5" stroke="#ccd6eb" stroke-width="1"/>
<line x1="97.3" x2="97.3" y1="456.5" y2="462.5" stroke="#ccd6eb" stroke-width="1"/>
<line x1="114.3" x2="114.3" y1="456.5" y2="462.5" stroke="#ccd6eb" stroke-width="1"/>
<line x1="131.4" x2="131.4" y1="456.5" y2="462.5" stroke="#ccd6eb" stroke-width="1"/>
<line x1="148.5" x2="148.5" y1="456.5" y2="462.5" stroke="#ccd6eb" stroke-width="1"/>
<line x1="165.6" x2="165.6" y1="456.5" y2="462.5" stroke="#ccd6eb" stroke-width="1"/>
<line x1="182.6" x2="182.6" y1="456.5" y2="462.5" stroke="#ccd6eb" stroke-width="1"/>
<line x1="199.7" x2="199.7" y1="456.5" y2="462.5" stroke="#ccd6eb" stroke-width="1"/>
<line x1="216.8" x2="216.8" y1="456.5" y2="462.5" stroke="#ccd6eb" stroke-width="1"/>
<line x1="233.8" x2="233.8" y1="456.5" y2="462.5" stroke="#ccd6eb" stroke-width="1"/>
<line x1="250.9" x2="250.9" y1="456.5" y2="462.5" stroke="#ccd6eb" stroke-width="1"/>
<line x1="268.0" x2="268.0" y1="456.5" y2="462.5" stroke="#ccd6eb" stroke-width="1"/>
<line x1="285.0" x2="285.0" y1="456.5" y2="462.5" stroke="#ccd6eb" stroke-width="1"/>
<line x1="302.1" x2="302.1" y1="456.5" y2="462.5" stroke="#ccd6eb" stroke-width="1"/>
<line x1="319.2" x2="319.2" y1="456.5" y2="462.5" stroke="#ccd6eb" stroke-width="1"/>
<line x1="336.2" x2="336.2" y1="456.5" y2="462.5" stroke="#ccd6eb" stroke-width="1"/>
<line x1="353.3" x2="353.3" y1="456.5" y2="462.5" stroke="#ccd6eb" stroke-width="1"/>
<line x1="370.4" x2="370.4" y1="456.5" y2="462.5" stroke="#ccd6eb" stroke-width="1"/>
<line x1="387.5" x2="387.5" y1="456.5" y2="462.5" stroke="#ccd6eb" stroke-width="1"/>
<line x1="404.5" x2="404.5" y1="456.5" y2="462.5" stroke="#ccd6eb" stroke-width="1"/>
<line x1="421.6" x2="421.6" y1="456.5" y2="462.5" stroke="#ccd6eb" stroke-width="1"/>
<line x1="438.7" x2="438.7" y1="456.5" y2="462.5" stroke="#ccd6eb" stroke-width="1"/>
<line x1="455.7" x2="455.7" y1="456.5" y2="462.5" stroke="#ccd6eb" stroke-width="1"/>
<line x1="472.8" x2="472.8" y1="456.5" y2="462.5" stroke="#ccd6eb" stroke-width="1"/>
<line x1="489.9" x2="489.9" y1="456.5" y2="462.5" stroke="#ccd6eb" stroke-width="1"/>
<rect x="84.50" y="388.7" width="8.7" height="67.8" fill="#4c0026" stroke="#000" stroke-opacity="0.5" stroke-width="0.6"/>
<rect x="101.57" y="385.4" width="8.7" height="71.1" fill="#4c0026" stroke="#000" stroke-opacity="0.5" stroke-width="0.6"/>
<rect x="118.64" y="368.2" width="8.7" height="88.3" fill="#4c0026" stroke="#000" stroke-opacity="0.5" stroke-width="0.6"/>
<rect x="135.71" y="391.1" width="8.7" height="65.4" fill="#4c0026" stroke="#000" stroke-opacity="0.5" stroke-width="0.6"/>
<rect x="152.78" y="402.0" width="8.7" height="54.5" fill="#99004c" stroke="#000" stroke-opacity="0.5" stroke-width="0.6"/>
<rect x="169.85" y="403.0" width="8.7" height="53.5" fill="#99004c" stroke="#000" stroke-opacity="0.5" stroke-width="0.6"/>
<rect x="186.92" y="411.8" width="8.7" height="44.7" fill="#99004c" stroke="#000" stroke-opacity="0.5" stroke-width="0.6"/>
<rect x="203.99" y="417.8" width="8.7" height="38.7" fill="#ff0000" stroke="#000" stroke-opacity="0.5" stroke-width="0.6"/>
<rect x="221.06" y="421.5" width="8.7" height="35.0" fill="#ff0000" stroke="#000" stroke-opacity="0.5" stroke-width="0.6"/>
<rect x="238.13" y="422.1" width="8.7" height="34.4" fill="#ff0000" stroke="#000" stroke-opacity="0.5" stroke-width="0.6"/>
<rect x="255.20" y="425.2" width="8.7" height="31.3" fill="#ff7e00" stroke="#000" stroke-opacity="0.5" stroke-width="0.6"/>
<rect x="272.27" y="433.2" width="8.7" height="23.3" fill="#ff7e00" stroke="#000" stroke-opacity="0.5" stroke-width="0.6"/>
<rect x="289.34" y="438.3" width="8.7" height="18.2" fill="#ffff00" stroke="#000" stroke-opacity="0.5" stroke-width="0.6"/>
<rect x="306.41" y="437.0" width="8.7" height="19.5" fill="#ffff00" stroke="#000" stroke-opacity="0.5" stroke-width="0.6"/>
<rect x="323.48" y="433.8" width="8.7" height="22.7" fill="#ff7e00" stroke="#000" stroke-opacity="0.5" stroke-width="0.6"/>
<rect x="340.55" y="436.6" width="8.7" height="19.9" fill="#ffff00" stroke="#000" stroke-opacity="0.5" stroke-width="0.6"/>
<rect x="357.62" y="424.5" width="8.7" height="32.0" fill="#ff0000" stroke="#000" stroke-opacity="0.5" stroke-width="0.6"/>
<rect x="374.69" y="417.8" width="8.7" height="38.7" fill="#ff0000" stroke="#000" stroke-opacity="0.5" stroke-width="0.6"/>
<rect x="391.76" y="423.3" width="8.7" height="33.2" fill="#ff0000" stroke="#000" stroke-opacity="0.5" stroke-width="0.6"/>
<rect x="408.83" y="416.1" width="8.7" height="40.4" fill="#ff0000" stroke="#000" stroke-opacity="0.5" stroke-width="0.6"/>
<rect x="425.90" y="378.0" width="8.7" height="78.5" fill="#4c0026" stroke="#000" stroke-opacity="0.5" stroke-width="0.6"/>
<rect x="442.97" y="382.5" width="8.7" height="74.0" fill="#4c0026" stroke="#000" stroke-opacity="0.5" stroke-width="0.6"/>
<rect x="460.04" y="385.0" width="8.7" height="71.5" fill="#4c0026" stroke="#000" stroke-opacity="0.5" stroke-width="0.6"/>
<rect x="477.11" y="385.0" width="8.7" height="71.5" fill="#4c0026" stroke="#000" stroke-opacity="0.5" stroke-width="0.6"/>
<text transform="translate(90.3,466.2) rotate(-45)" text-anchor="end" font-size="6.5" fill="#666">8 PM</text>
<text transform="translate(107.4,466.2) rotate(-45)" text-anchor="end" font-size="6.5" fill="#666">9 PM</text>
<text transform="translate(124.5,466.2) rotate(-45)" text-anchor="end" font-size="6.5" fill="#666">10 PM</text>
<text transform="translate(141.5,466.2) rotate(-45)" text-anchor="end" font-size="6.5" fill="#666">11 PM</text>
<text transform="translate(158.6,466.2) rotate(-45)" text-anchor="end" font-size="6.5" fill="#666">Jan 29, 2021 12 AM</text>
<text transform="translate(175.7,466.2) rotate(-45)" text-anchor="end" font-size="6.5" fill="#666">1 AM</text>
<text transform="translate(192.8,466.2) rotate(-45)" text-anchor="end" font-size="6.5" fill="#666">2 AM</text>
<text transform="translate(209.8,466.2) rotate(-45)" text-anchor="end" font-size="6.5" fill="#666">3 AM</text>
<text transform="translate(226.9,466.2) rotate(-45)" text-anchor="end" font-size="6.5" fill="#666">4 AM</text>
<text transform="translate(244.0,466.2) rotate(-45)" text-anchor="end" font-size="6.5" fill="#666">5 AM</text>
<text transform="translate(261.0,466.2) rotate(-45)" text-anchor="end" font-size="6.5" fill="#666">6 AM</text>
<text transform="translate(278.1,466.2) rotate(-45)" text-anchor="end" font-size="6.5" fill="#666">7 AM</text>
<text transform="translate(295.2,466.2) rotate(-45)" text-anchor="end" font-size="6.5" fill="#666">8 AM</text>
<text transform="translate(312.2,466.2) rotate(-45)" text-anchor="end" font-size="6.5" fill="#666">9 AM</text>
<text transform="translate(329.3,466.2) rotate(-45)" text-anchor="end" font-size="6.5" fill="#666">10 AM</text>
<text transform="translate(346.4,466.2) rotate(-45)" text-anchor="end" font-size="6.5" fill="#666">11 AM</text>
<text transform="translate(363.5,466.2) rotate(-45)" text-anchor="end" font-size="6.5" fill="#666">12 PM</text>
<text transform="translate(380.5,466.2) rotate(-45)" text-anchor="end" font-size="6.5" fill="#666">1 PM</text>
<text transform="translate(397.6,466.2) rotate(-45)" text-anchor="end" font-size="6.5" fill="#666">2 PM</text>
<text transform="translate(414.7,466.2) rotate(-45)" text-anchor="end" font-size="6.5" fill="#666">3 PM</text>
<text transform="translate(431.7,466.2) rotate(-45)" text-anchor="end" font-size="6.5" fill="#666">4 PM</text>
<text transform="translate(448.8,466.2) rotate(-45)" text-anchor="end" font-size="6.5" fill="#666">5 PM</text>
<text transform="translate(465.9,466.2) rotate(-45)" text-anchor="end" font-size="6.5" fill="#666">6 PM</text>
<text transform="translate(482.9,466.2) rotate(-45)" text-anchor="end" font-size="6.5" fill="#666">7 PM</text>
<text x="266.5" y="330" text-anchor="middle" font-size="10" fill="#333">Bishkek – PM2.5</text>
<text transform="translate(53.8,401) rotate(-90)" text-anchor="middle" font-size="5.9" fill="#333" stroke="#333" stroke-width="0.2">AQI</text>
<!--/CHART-->
</svg>
</div>

<div id="cc" class="abs">
<div class="h"><div style="font-size:8.7px;margin-top:4px;line-height:11px">Current Conditions</div><div style="font-size:6.87px;line-height:13px">observed at</div><div style="font-size:8.7px;line-height:11px">Jan 29, 2021 7:00 PM (LT)</div></div>
<div class="m">341 AQI<br>Hazardous<br>PM2.5</div>
<div class="hm"><div style="text-align:center;font-weight:bold;font-size:6.8px;color:#333;margin-left:-3px;margin-bottom:1.4px">Health Message</div>AQI values over 300 trigger health warnings<br>of emergency conditions. The entire<br>population is even more likely to be affected<br>by serious health effects.</div>
</div>
</body>
</html>
